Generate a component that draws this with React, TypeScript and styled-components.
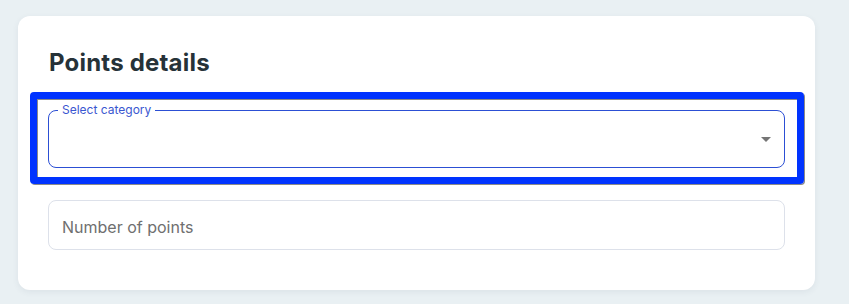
import React from 'react';
import styled, { createGlobalStyle } from 'styled-components';

const GlobalStyle = createGlobalStyle`
  html, body {
    margin: 0;
    padding: 0;
    background: #e9f0f3;
    font-family: Inter, "Noto Sans", sans-serif;
  }
`;

const Page = styled.div`
  padding: 16px 34px 14px 18px;
`;

const Card = styled.section`
  background: #ffffff;
  border-radius: 12px;
  box-shadow: 0 2px 6px rgba(60, 80, 100, 0.08);
  padding: 33px 30px 40px 30px;
`;

const Title = styled.h2`
  margin: 0 0 16px 1px;
  font-size: 24px;
  line-height: 27px;
  font-weight: 700;
  color: #263238;
  letter-spacing: 0.2px;
`;

const Highlight = styled.div`
  margin: 0 -19px 0 -18px;
  border: 7px solid #0033ff;
  border-radius: 4px;
  padding: 11px 12px 9px 11px;
  box-shadow: inset 1px 1px 0 #8a8a8a, 1px 1px 0 #8a8a8a;
`;

const Outlined = styled.div`
  position: relative;
  height: 58px;
`;

const Fieldset = styled.fieldset<{ $focused?: boolean }>`
  position: absolute;
  inset: -6px 0 0 0;
  margin: 0;
  padding: 0 9px;
  border: 1px solid ${(p) => (p.$focused ? '#2c4fd4' : '#dde1ea')};
  border-radius: 8px;
  pointer-events: none;
`;

const Legend = styled.legend`
  padding: 0 4px;
  font-size: 12px;
  line-height: 12px;
  color: #3a57d0;
  font-family: Inter, "Noto Sans", sans-serif;
`;

const Arrow = styled.div`
  position: absolute;
  right: 14px;
  top: 27px;
  width: 0;
  height: 0;
  border-left: 5px solid transparent;
  border-right: 5px solid transparent;
  border-top: 5px solid #757575;
`;

const Input = styled.input`
  display: block;
  box-sizing: border-box;
  width: 100%;
  height: 50px;
  margin-top: 16px;
  padding: 3px 13px 0;
  border: 1px solid #dde1ea;
  border-radius: 8px;
  font-family: Inter, "Noto Sans", sans-serif;
  font-size: 16px;
  color: #333;
  outline: none;
  &::placeholder {
    color: #6f6f6f;
  }
`;

export default function App() {
  return (
    <>
      <GlobalStyle />
      <Page>
        <Card>
          <Title>Points details</Title>
          <Highlight>
            <Outlined>
              <Fieldset $focused>
                <Legend>Select category</Legend>
              </Fieldset>
              <Arrow />
            </Outlined>
          </Highlight>
          <Input placeholder="Number of points" />
        </Card>
      </Page>
    </>
  );
}
